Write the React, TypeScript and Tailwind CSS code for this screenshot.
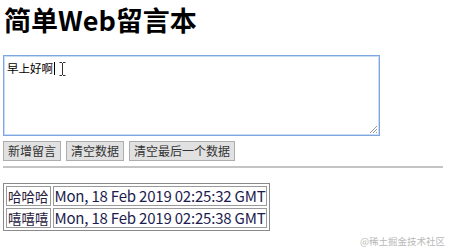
import React from "react";

const CJK = '"Noto Sans CJK SC", "Noto Sans", sans-serif';

export default function App() {
  return (
    <div
      className="relative w-[452px] h-[249px] overflow-hidden bg-white text-black"
      style={{ fontFamily: CJK }}
    >
      <h1 className="pl-[4px] text-[27px] font-bold leading-[40px]">
        简单Web留言本
      </h1>

      <div className="ml-[3px] mt-[15px] relative w-[377px] h-[81px] border border-[#7ea6e0] shadow-[0_0_0_1px_#c8dbf5_inset] bg-white">
        <div className="flex items-center pl-[3px] pt-[4px] text-[11.5px] leading-[16px]">
          <span>早上好啊</span>
          <span className="ml-[1px] w-[1px] h-[13px] bg-black" />
          <svg className="ml-[4px] mt-[2px]" width="7" height="14" viewBox="0 0 7 14">
            <path d="M0.5 0.5h2.5M4 0.5h2.5M3.5 1v12M0.5 13.5h2.5M4 13.5h2.5" stroke="#333" strokeWidth="1" fill="none" />
          </svg>
        </div>
        <svg className="absolute right-[1px] bottom-[1px]" width="9" height="9" viewBox="0 0 9 9">
          <path d="M8 1L1 8M8 4L4 8M8 7L7 8" stroke="#999" strokeWidth="1" />
        </svg>
      </div>

      <div className="ml-[3px] mt-[5px] flex gap-[5px]">
        {["新增留言", "清空数据", "清空最后一个数据"].map((t) => (
          <button
            key={t}
            className="h-[20px] px-[4px] border border-[#adadad] bg-[#e1e1e1] text-[12px] leading-[18px] text-[#333]"
          >
            {t}
          </button>
        ))}
      </div>

      <div className="ml-[3px] mt-[5px] w-[440px] border-t-[2px] border-[#c4c4c4]" />

      <div className="ml-[3px] mt-[15px]">
        <table className="border border-[#8a8a8a] border-separate border-spacing-[2px] leading-[18px]">
          <tbody>
            {[
              ["哈哈哈", "Mon, 18 Feb 2019 02:25:32 GMT"],
              ["嘻嘻嘻", "Mon, 18 Feb 2019 02:25:38 GMT"],
            ].map(([a, b]) => (
              <tr key={a}>
                <td className="border border-[#9a9a9a] px-[1px] py-0 text-[13.5px] text-[#2a2340]">{a}</td>
                <td className="border border-[#9a9a9a] px-[1px] py-0 text-[15px] tracking-[-0.2px] text-[#1c1c50]">{b}</td>
              </tr>
            ))}
          </tbody>
        </table>
      </div>

      <div className="absolute right-[7px] bottom-[2px] text-[9.5px] leading-[12px] text-[#b8b8b8]">
        @稀土掘金技术社区
      </div>
    </div>
  );
}
